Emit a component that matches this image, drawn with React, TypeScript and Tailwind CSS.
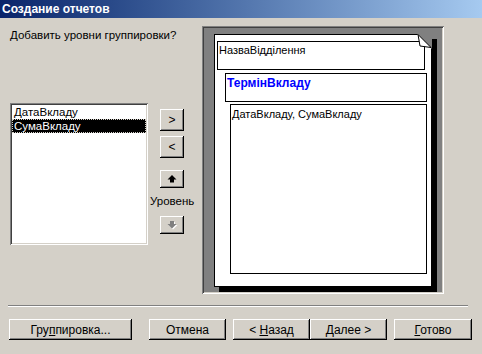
import React from "react";

const btn =
  "bg-[#d4d0c8] shadow-[inset_-1px_-1px_0_#000,inset_1px_1px_0_#fff,inset_-2px_-2px_0_#808080] flex items-center justify-center text-black";

function UpArrow() {
  return (
    <svg width="11" height="9" viewBox="0 0 11 9">
      <polygon points="5,0 9.5,4.5 7,4.5 7,7.5 3,7.5 3,4.5 0.5,4.5" fill="#000" />
    </svg>
  );
}

function DownArrow() {
  return (
    <svg width="11" height="9" viewBox="0 0 11 9">
      <polygon points="4,1 8,1 8,4 10.5,4 6,8.5 1.5,4 4,4" fill="#fff" />
      <polygon points="3,0 7,0 7,3 9.5,3 5,7.5 0.5,3 3,3" fill="#808080" />
    </svg>
  );
}

export default function App() {
  return (
    <div
      className="w-[482px] h-[354px] bg-[#d4d0c8] overflow-hidden flex flex-col text-[11px] text-black"
      style={{ fontFamily: '"Liberation Sans", Arial, sans-serif' }}
    >
      <div className="h-[18px] shrink-0 bg-gradient-to-r from-[#0a246a] to-[#a6caf0] text-white font-bold text-[12px] leading-[18px] pl-[2px]">
        Создание отчетов
      </div>
      <div className="flex h-[287px] shrink-0">
        <div className="w-[202px] pl-[10px]">
          <div className="mt-[11px] leading-[13px] text-[11.5px]">Добавить уровни группировки?</div>
          <div className="flex mt-[61px]">
            <div className="w-[138px] h-[142px] bg-white shadow-[inset_1px_1px_0_#808080,inset_-1px_-1px_0_#fff,inset_2px_2px_0_#404040,inset_-2px_-2px_0_#d4d0c8] pt-[2px] px-[2px] text-[11.5px]">
              <div className="h-[14px] leading-[14px] pl-[2px]">ДатаВкладу</div>
              <div className="h-[14px] leading-[12px] bg-black text-white border border-dotted border-[#d4d0c8] pl-[1px]">
                СумаВкладу
              </div>
            </div>
            <div className="ml-[12px] w-[32px] flex flex-col items-start">
              <div className={`${btn} w-[24px] h-[22px] mt-[6px] text-[12px]`}>&gt;</div>
              <div className={`${btn} w-[24px] h-[22px] mt-[5px] text-[12px]`}>&lt;</div>
              <div className={`${btn} w-[24px] h-[18px] mt-[12px]`}>
                <UpArrow />
              </div>
              <div className="-ml-[10px] mt-[6px] text-[11.5px] leading-[14px]">Уровень</div>
              <div className={`${btn} w-[24px] h-[18px] mt-[8px]`}>
                <DownArrow />
              </div>
            </div>
          </div>
        </div>
        <div className="mt-[8px] w-[242px] h-[268px] bg-[#808080] shadow-[inset_1px_1px_0_#808080,inset_-1px_-1px_0_#fff,inset_2px_2px_0_#404040,inset_-2px_-2px_0_#d4d0c8] pt-[8px] pl-[12px]">
          <div className="relative w-[218px] h-[253px] bg-white border border-black shadow-[5px_5px_0_#000] pt-[6px]">
            <svg className="absolute -right-[1px] -top-[1px]" width="15" height="15" viewBox="0 0 15 15">
              <polygon points="0,0 15,0 15,15" fill="#808080" />
              <polygon points="1,0.5 14,13.5 3,12" fill="#fff" stroke="#000" strokeWidth="1" />
            </svg>
            <div className="ml-[2px] w-[208px] h-[29px] border border-black pl-[1px] leading-[14px] pt-[1px]">
              НазваВідділення
            </div>
            <div className="ml-[10px] mt-[3px] w-[202px] h-[29px] border border-black pl-[1px] pt-[2px] leading-[14px] font-bold text-[12px] text-[#0000ff]">
              ТермінВкладу
            </div>
            <div className="ml-[15px] mt-[2px] w-[197px] h-[170px] border border-black pl-[1px] pt-[2px] leading-[14px]">
              ДатаВкладу, СумаВкладу
            </div>
          </div>
        </div>
      </div>
      <div className="ml-[8px] w-[460px] h-[2px] border-t border-[#808080] border-b border-b-white shrink-0" />
      <div className="flex mt-[12px] pl-[9px] h-[21px] text-[12px]">
        <div className={`${btn} w-[123px] h-[21px]`}>
          <span>
            Гру<span className="underline">п</span>пировка...
          </span>
        </div>
        <div className={`${btn} w-[77px] h-[21px] ml-[17px]`}>Отмена</div>
        <div className={`${btn} w-[77px] h-[21px] ml-[7px]`}>
          <span className="whitespace-pre">
            {"< "}
            <span className="underline">Н</span>азад
          </span>
        </div>
        <div className={`${btn} w-[77px] h-[21px]`}>
          <span className="whitespace-pre">
            <span className="underline">Д</span>
            {"алее >"}
          </span>
        </div>
        <div className={`${btn} w-[78px] h-[21px] ml-[7px]`}>
          <span>
            <span className="underline">Г</span>отово
          </span>
        </div>
      </div>
    </div>
  );
}
